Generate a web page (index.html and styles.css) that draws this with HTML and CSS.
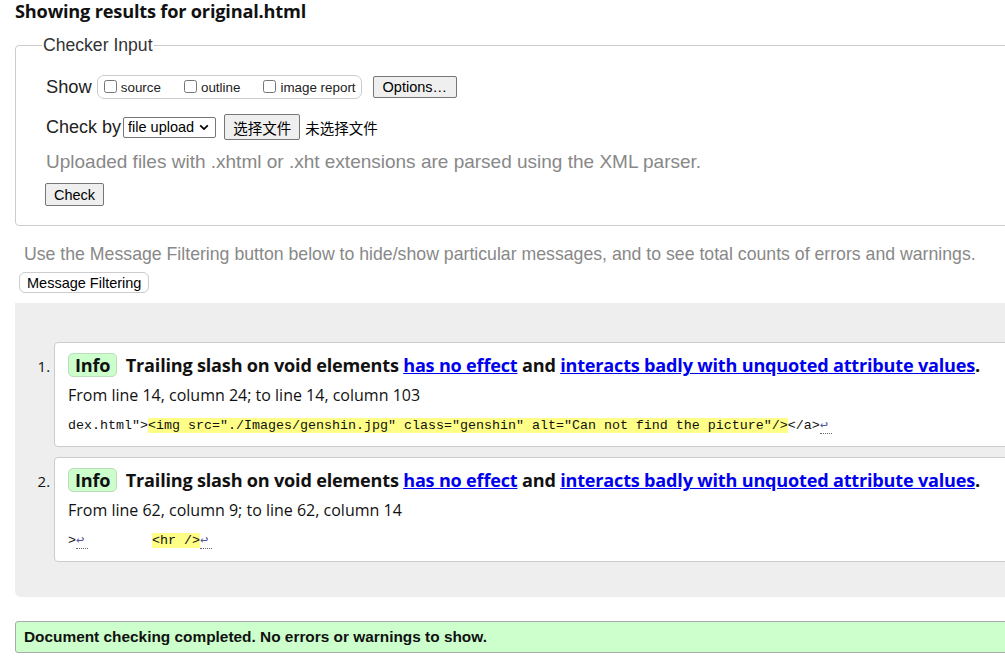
FILE: index.html
```html
<!DOCTYPE html>
<html>
<head>
<meta charset="utf-8">
<link rel="stylesheet" href="styles.css">
</head>
<body>
<div class="page">
  <h2 class="results-title">Showing results for original.html</h2>
  <fieldset class="checker">
    <legend class="checker-legend">Checker Input</legend>
    <div class="row row-show">
      <span class="label-big">Show</span>
      <span class="opts">
        <label class="opt"><input type="checkbox" class="cb"><span>source</span></label>
        <label class="opt"><input type="checkbox" class="cb"><span>outline</span></label>
        <label class="opt"><input type="checkbox" class="cb"><span>image report</span></label>
      </span>
      <button class="btn btn-options">Options…</button>
    </div>
    <div class="row row-check">
      <span class="label-big">Check by</span>
      <span class="select"><span>file upload</span><svg class="chev" width="10" height="7" viewBox="0 0 10 7"><path d="M1.2 1.3 L5 5.1 L8.8 1.3" fill="none" stroke="#000" stroke-width="1.8"/></svg></span>
      <button class="btn btn-file">选择文件</button>
      <span class="nofile">未选择文件</span>
    </div>
    <p class="hint">Uploaded files with .xhtml or .xht extensions are parsed using the XML parser.</p>
    <div class="row row-submit"><button class="btn btn-check">Check</button></div>
  </fieldset>
  <p class="filter-note">Use the Message Filtering button below to hide/show particular messages, and to see total counts of errors and warnings.</p>
  <button class="btn-filter">Message Filtering</button>
  <div class="results">
    <ol class="messages">
      <li class="msg">
        <p class="msg-title"><span class="badge">Info</span> Trailing slash on void elements <a href="#">has no effect</a> and <a href="#">interacts badly with unquoted attribute values</a>.</p>
        <p class="location">From line 14, column 24; to line 14, column 103</p>
        <p class="extract"><code>dex.html"&gt;<b class="hl">&lt;img src="./Images/genshin.jpg" class="genshin" alt="Can not find the picture"/&gt;</b>&lt;/a&gt;<span class="lf">↩</span></code></p>
      </li>
      <li class="msg">
        <p class="msg-title"><span class="badge">Info</span> Trailing slash on void elements <a href="#">has no effect</a> and <a href="#">interacts badly with unquoted attribute values</a>.</p>
        <p class="location">From line 62, column 9; to line 62, column 14</p>
        <p class="extract"><code>&gt;<span class="lf">↩</span>        <b class="hl">&lt;hr /&gt;</b><span class="lf">↩</span></code></p>
      </li>
    </ol>
  </div>
  <p class="done">Document checking completed. No errors or warnings to show.</p>
</div>
</body>
</html>
```
FILE: styles.css
```css
html { overflow: hidden; }
body {
  margin: 0;
  background: #fff;
  color: #000;
  font-family: "Liberation Sans", Arial, sans-serif;
}
.page {
  width: 1060px;
  padding: 0 0 0 15px;
}
.results-title {
  margin: 0;
  font-family: "Open Sans", "Noto Sans", sans-serif;
  font-weight: 700;
  font-size: 18.2px;
  line-height: 22px;
  color: #111;
  letter-spacing: -0.2px;
}
.checker {
  margin: 13px 0 0 0;
  padding: 4px 30px 19px 30px;
  border: 1px solid #ccc;
  border-radius: 4px;
}
.checker-legend {
  padding: 0 1px;
  margin-left: -4px;
  font-size: 17.6px;
  color: #333;
}
.row {
  display: flex;
  align-items: center;
}
.row-show { margin-top: 15px; height: 24px; }
.label-big {
  font-size: 18.3px;
  color: #222;
  margin-right: 4px;
}
.row-check .label-big { margin-right: 2px; font-size: 18px; }
.opts {
  display: inline-flex;
  align-items: center;
  height: 22px;
  border: 1px solid #ccc;
  border-radius: 7px;
  padding: 0 5px 0 6px;
  margin-left: 1px;
}
.opt {
  display: inline-flex;
  align-items: center;
  font-size: 13.4px;
  color: #222;
  margin-right: 23px;
}
.opt:last-child { margin-right: 0; }
.cb {
  margin: 0 4px 2px 0;
  width: 13px;
  height: 13px;
}
.btn {
  font-family: "Liberation Sans", Arial, sans-serif;
  background: #efefef;
  border: 1px solid #767676;
  border-radius: 2px;
  color: #000;
  padding: 0 8px;
}
.btn-options {
  margin-left: 11px;
  height: 22px;
  font-size: 14.5px;
  padding: 0 9px;
}
.row-check { margin-top: 15px; height: 26px; }
.select {
  display: inline-flex;
  align-items: center;
  height: 19px;
  border: 1px solid #767676;
  border-radius: 2px;
  font-size: 14.5px;
  padding: 0 6px 0 4px;
  background: #fff;
}
.chev { margin-left: 5px; }
.btn-file {
  margin-left: 8px;
  height: 26px;
  font-size: 14.5px;
  padding: 0 8px;
  font-family: "Noto Sans CJK SC", sans-serif;
}
.nofile {
  margin-left: 5px;
  font-size: 14.5px;
  font-family: "Noto Sans CJK SC", sans-serif;
}
.hint {
  margin: 10px 0 0 0;
  font-size: 19px;
  line-height: 24px;
  color: #888;
}
.row-submit { margin-top: 9px; }
.btn-check {
  height: 23px;
  font-size: 14.5px;
  padding: 0 8px;
  margin-left: -1px;
}
.filter-note {
  margin: 16px 0 0 9px;
  font-size: 17.7px;
  line-height: 24px;
  color: #888;
}
.btn-filter {
  display: block;
  margin: 6px 0 0 4px;
  height: 21px;
  padding: 0 7px;
  font-family: "Liberation Sans", Arial, sans-serif;
  font-size: 14.5px;
  background: #fff;
  border: 1px solid #ccc;
  border-radius: 6px;
  color: #000;
}
.results {
  margin-top: 10px;
  background: #eee;
  border-radius: 0 0 0 6px;
  padding: 39px 0 35px 0;
}
.messages {
  margin: 0;
  padding: 0 0 0 39px;
  font-family: "Open Sans", "Noto Sans", sans-serif;
}
.msg {
  background: #fff;
  border: 1px solid #ccc;
  border-radius: 4px;
  padding: 10px 13px 9px 13px;
  margin-bottom: 10px;
  font-size: 15px;
  color: #111;
}
.msg:last-child { margin-bottom: 0; }
.msg::marker {
  font-size: 15px;
}
.msg-title {
  margin: 0;
  font-size: 18.1px;
  font-weight: 700;
  line-height: 24px;
  letter-spacing: -0.2px;
}
.msg-title a { color: #00e; }
.badge {
  display: inline-block;
  background: #cfc;
  border: 1px solid #bdb;
  border-radius: 5px;
  padding: 0 6px;
  margin-right: 4px;
  line-height: 22px;
}
.location {
  margin: 7px 0 0 0;
  font-size: 16px;
  line-height: 22px;
}
.extract {
  margin: 6px 0 0 0;
  line-height: 22px;
}
.extract code {
  font-family: "Liberation Mono", monospace;
  font-size: 13.33px;
  white-space: pre;
}
.hl {
  font-weight: normal;
  background: #ff8;
}
.lf {
  display: inline-block;
  width: 12px;
  color: #559;
  border-bottom: 1px dotted #666;
  line-height: 14px;
}
.done {
  margin: 24px 0 0 0;
  background: #cfc;
  border: 1px solid #aaa;
  border-radius: 3px;
  padding: 0 8px;
  height: 30px;
  line-height: 30px;
  font-size: 15.4px;
  font-weight: 700;
  color: #111;
}
```
